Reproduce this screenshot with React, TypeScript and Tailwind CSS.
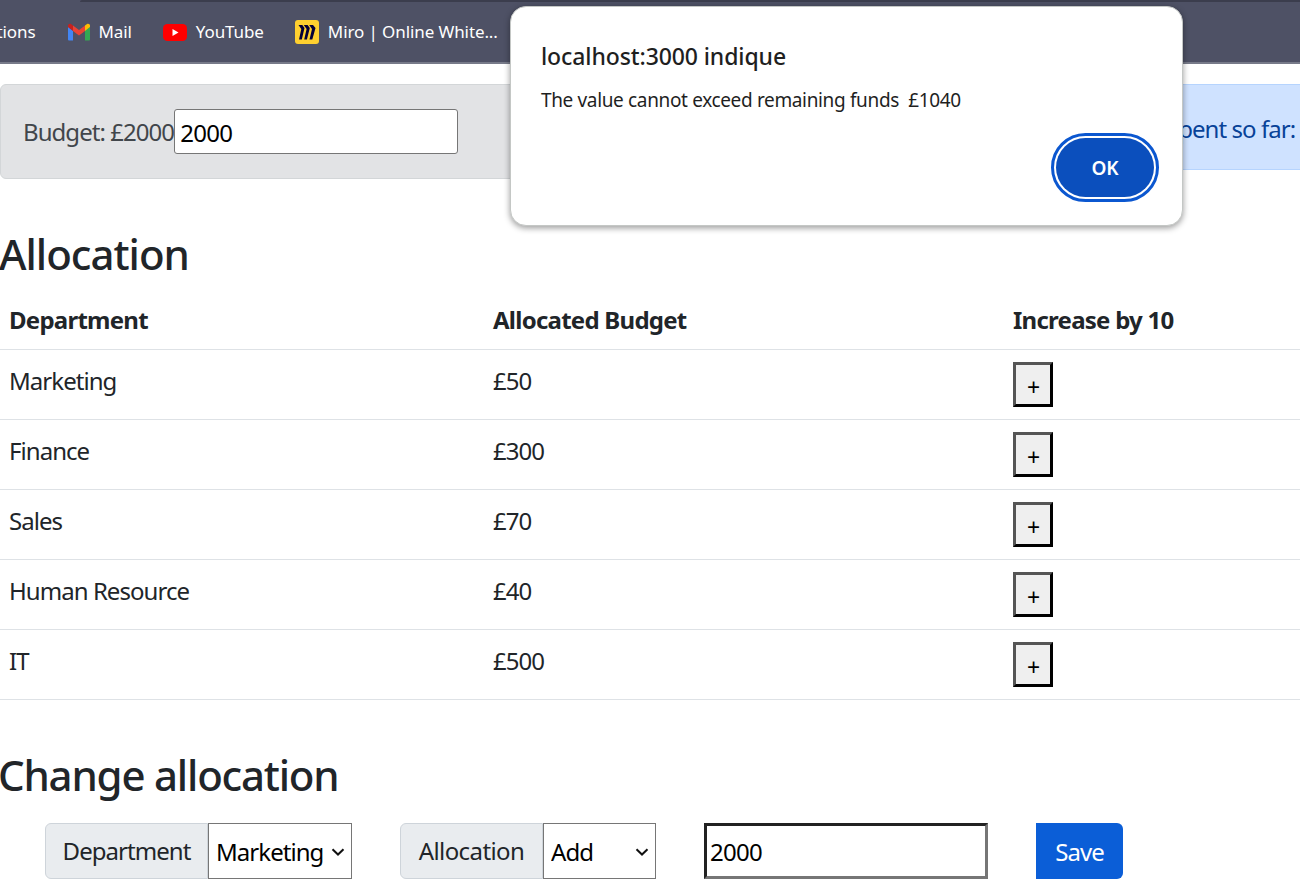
const rows = [
  { name: "Marketing", budget: 50 },
  { name: "Finance", budget: 300 },
  { name: "Sales", budget: 70 },
  { name: "Human Resource", budget: 40 },
  { name: "IT", budget: 500 },
];

function GmailIcon() {
  return (
    <svg width="24" height="18" viewBox="0 0 24 18" className="shrink-0">
      <path d="M1 16.500V4l5 3.800v9.700H2a1 1 0 0 1-1-1z" fill="#4285f4" />
      <path d="M23 16.500V4l-5 3.800v9.700h4a1 1 0 0 0 1-1z" fill="#34a853" />
      <path d="M6 8V2.500l6 4.600 6-4.600V8l-6 4.600z" fill="#ea4335" />
      <path d="M18 8V2.500L20 1c1.300-.9 3-.1 3 1.600V4z" fill="#fbbc04" />
      <path d="M6 8V2.500L4 1C2.700.1 1 .9 1 2.600V4z" fill="#c5221f" />
    </svg>
  );
}

function YoutubeIcon() {
  return (
    <svg width="24" height="17" viewBox="0 0 24 17" className="shrink-0">
      <rect x="0" y="0" width="24" height="17" rx="4.500" fill="#ff0000" />
      <path d="M9.500 5v7l6-3.500z" fill="#fff" />
    </svg>
  );
}

function MiroIcon() {
  return (
    <svg width="24" height="24" viewBox="0 0 24 24" className="shrink-0">
      <rect width="24" height="24" rx="3" fill="#ffd02f" />
      <path d="M3.500 5h3.800l2.200 3-2.700 11.500H4L6.300 9z" fill="#050038" />
      <path d="M8.800 5h3.800l2.200 3-2.900 11.500H9.200L11.600 9z" fill="#050038" />
      <path d="M14.200 5H18l2.500 3-3.200 11.500h-2.800L17 9z" fill="#050038" />
    </svg>
  );
}

function Chevron() {
  return (
    <svg
      width="14"
      height="8"
      viewBox="0 0 14 8"
      className="pointer-events-none absolute top-[25px] right-[7px]"
    >
      <path d="M1.500 1.200L7 6.500l5.500-5.300" fill="none" stroke="#111" strokeWidth="2" />
    </svg>
  );
}

export default function App() {
  return (
    <div className="relative h-[892px] overflow-hidden bg-white font-['Noto_Sans',sans-serif] text-[#212529]">
      {/* browser chrome */}
      <div className="h-[64px] overflow-hidden border-b-2 border-[#777a89] bg-[#4e5165] text-white">
        <div className="ml-[80px] h-[2px] rounded-tl-lg bg-[#3b3d4d]" />
        <div className="mt-[18px] flex h-[24px] items-center text-[17px] tracking-[-0.1px] whitespace-nowrap">
          <span className="ml-[-61px]">Applications</span>
          <span className="ml-[31px] flex items-center gap-[8px]">
            <GmailIcon />
            Mail
          </span>
          <span className="ml-[31px] flex items-center gap-[9px]">
            <YoutubeIcon />
            YouTube
          </span>
          <span className="ml-[31px] flex items-center gap-[9px]">
            <MiroIcon />
            Miro | Online White...
          </span>
        </div>
      </div>

      {/* budget row */}
      <div className="mt-[20px] flex items-start gap-[24px]">
        <div className="flex h-[95px] w-[620px] shrink-0 items-center rounded-md border border-[#d3d6d8] bg-[#e2e3e5] pl-[22px] text-[24px] tracking-[-0.95px] text-[#41464b]">
          <span className="whitespace-nowrap pt-px">Budget: £2000</span>
          <input
            readOnly
            value="2000"
            className="h-[45px] w-[284px] rounded-[3px] border border-[#767676] bg-white px-[5px] pt-px text-[24px] tracking-[-0.7px] text-black outline-none"
          />
        </div>
        <div className="flex h-[86px] flex-1 items-center rounded-md border border-[#b6d4fe] bg-[#cfe2ff] pt-[3px] pl-[521px] text-[24px] tracking-[-0.95px] whitespace-nowrap text-[#084298]">
          Spent so far: £960
        </div>
      </div>

      <h3 className="mt-[50px] ml-[-1px] h-[50px] text-[42px] leading-[50px] font-medium tracking-[-1px]">
        Allocation
      </h3>

      <table className="mt-[10px] w-full border-collapse text-left text-[24px] tracking-[-0.95px]">
        <thead>
          <tr className="h-[60px] border-b border-[#dee2e6] tracking-[-0.75px]">
            <th className="w-[484px] pt-[2px] pl-[9px] font-bold">Department</th>
            <th className="w-[520px] pt-[2px] pl-[9px] font-bold">Allocated Budget</th>
            <th className="pt-[2px] pl-[9px] font-bold">Increase by 10</th>
          </tr>
        </thead>
        <tbody>
          {rows.map((row) => (
            <tr key={row.name} className="h-[70px] border-b border-[#dee2e6]">
              <td className="pt-[13px] pl-[9px] align-top">{row.name}</td>
              <td className="pt-[13px] pl-[9px] align-top">£{row.budget}</td>
              <td className="pt-[12px] pl-[9px] align-top">
                <button className="flex h-[45px] w-[40px] items-center justify-center border-[3px] border-t-[#555555] border-r-black border-b-black border-l-[#555555] bg-[#efefef] pt-[6px] text-[23px] leading-none text-black">
                  +
                </button>
              </td>
            </tr>
          ))}
        </tbody>
      </table>

      <h3 className="mt-[50px] ml-[-2px] h-[50px] text-[42px] leading-[50px] font-medium tracking-[-1.2px]">
        Change allocation
      </h3>

      {/* form */}
      <div className="mt-[23px] flex h-[56px] pl-[45px] text-[24px] tracking-[-0.95px]">
        <label className="flex w-[163px] items-center justify-center rounded-l-md border border-[#ced4da] bg-[#e9ecef] pt-px">
          Department
        </label>
        <div className="relative w-[144px]">
          <select className="h-full w-full appearance-none border border-[#767676] bg-white pt-[2px] pl-[7px] text-black">
            <option>Marketing</option>
          </select>
          <Chevron />
        </div>
        <label className="ml-[48px] flex w-[143px] items-center justify-center rounded-l-md border border-[#ced4da] bg-[#e9ecef] pt-px tracking-[-0.6px]">
          Allocation
        </label>
        <div className="relative w-[113px]">
          <select className="h-full w-full appearance-none border border-[#767676] bg-white pt-[2px] pl-[7px] text-black">
            <option>Add</option>
          </select>
          <Chevron />
        </div>
        <input
          readOnly
          value="2000"
          className="ml-[48px] w-[284px] border-[3px] border-t-[#222222] border-r-[#767676] border-b-[#767676] border-l-[#222222] bg-white px-[3px] pt-[2px] tracking-[-0.7px] text-black outline-none"
        />
        <button className="ml-[48px] w-[87px] rounded-r-md bg-[#0b5ed7] pt-[2px] text-white">
          Save
        </button>
      </div>

      {/* alert dialog */}
      <div className="absolute top-[6px] left-[510px] h-[220px] w-[673px] rounded-[16px] border border-[#c4c7c5] bg-white px-[30px] shadow-[0_2px_6px_rgba(0,0,0,0.4)]">
        <p className="mt-[34px] text-[23px] leading-[30px] font-medium tracking-[-0.1px] text-[#1f1f1f]">
          localhost:3000 indique
        </p>
        <p className="mt-[16px] text-[19px] leading-[26px] tracking-[-0.35px] whitespace-pre text-[#1f1f1f]">
          The value cannot exceed remaining funds  £1040
        </p>
        <button className="absolute top-[126px] left-[540px] flex h-[69px] w-[108px] items-center justify-center rounded-full border-[3px] border-[#0b57d0] p-[2px]">
          <span className="flex h-full w-full items-center justify-center rounded-full bg-[#0b4fbd] pt-px text-[19px] font-semibold text-white">
            OK
          </span>
        </button>
      </div>
    </div>
  );
}
